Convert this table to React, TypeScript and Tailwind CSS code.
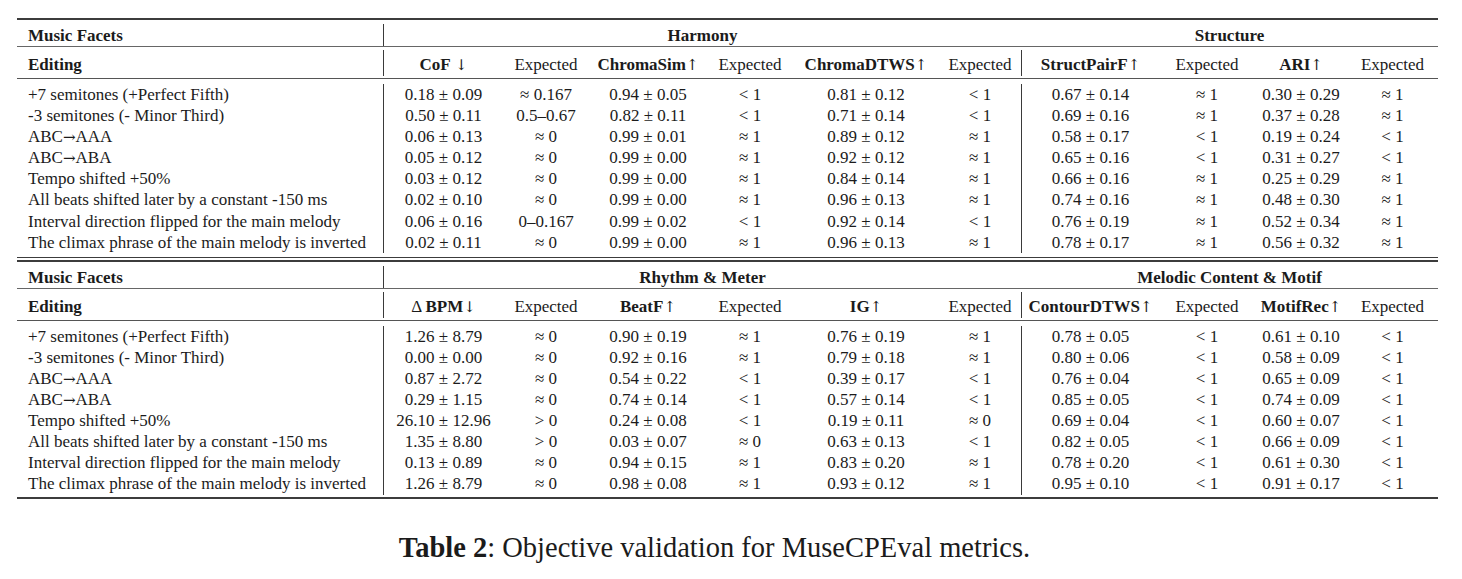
import React from "react";

type Head = { pre?: string; name: string; arrow?: string; bold: boolean };

const cols =
    "grid grid-cols-[366px_120px_86px_118px_86px_146px_82px_138px_96px_92px_91px]";

const topHeads: Head[] = [
    { name: "CoF", arrow: " ↓", bold: true },
    { name: "Expected", bold: false },
    { name: "ChromaSim", arrow: "↑", bold: true },
    { name: "Expected", bold: false },
    { name: "ChromaDTWS", arrow: "↑", bold: true },
    { name: "Expected", bold: false },
    { name: "StructPairF", arrow: "↑", bold: true },
    { name: "Expected", bold: false },
    { name: "ARI", arrow: "↑", bold: true },
    { name: "Expected", bold: false },
];

const bottomHeads: Head[] = [
    { pre: "Δ ", name: "BPM", arrow: "↓", bold: true },
    { name: "Expected", bold: false },
    { name: "BeatF", arrow: "↑", bold: true },
    { name: "Expected", bold: false },
    { name: "IG", arrow: "↑", bold: true },
    { name: "Expected", bold: false },
    { name: "ContourDTWS", arrow: "↑", bold: true },
    { name: "Expected", bold: false },
    { name: "MotifRec", arrow: "↑", bold: true },
    { name: "Expected", bold: false },
];

const topRows: string[][] = [
    ["+7 semitones (+Perfect Fifth)", "0.18 ± 0.09", "≈ 0.167", "0.94 ± 0.05", "< 1", "0.81 ± 0.12", "< 1", "0.67 ± 0.14", "≈ 1", "0.30 ± 0.29", "≈ 1"],
    ["-3 semitones (- Minor Third)", "0.50 ± 0.11", "0.5–0.67", "0.82 ± 0.11", "< 1", "0.71 ± 0.14", "< 1", "0.69 ± 0.16", "≈ 1", "0.37 ± 0.28", "≈ 1"],
    ["ABC→AAA", "0.06 ± 0.13", "≈ 0", "0.99 ± 0.01", "≈ 1", "0.89 ± 0.12", "≈ 1", "0.58 ± 0.17", "< 1", "0.19 ± 0.24", "< 1"],
    ["ABC→ABA", "0.05 ± 0.12", "≈ 0", "0.99 ± 0.00", "≈ 1", "0.92 ± 0.12", "≈ 1", "0.65 ± 0.16", "< 1", "0.31 ± 0.27", "< 1"],
    ["Tempo shifted +50%", "0.03 ± 0.12", "≈ 0", "0.99 ± 0.00", "≈ 1", "0.84 ± 0.14", "≈ 1", "0.66 ± 0.16", "≈ 1", "0.25 ± 0.29", "≈ 1"],
    ["All beats shifted later by a constant -150 ms", "0.02 ± 0.10", "≈ 0", "0.99 ± 0.00", "≈ 1", "0.96 ± 0.13", "≈ 1", "0.74 ± 0.16", "≈ 1", "0.48 ± 0.30", "≈ 1"],
    ["Interval direction flipped for the main melody", "0.06 ± 0.16", "0–0.167", "0.99 ± 0.02", "< 1", "0.92 ± 0.14", "< 1", "0.76 ± 0.19", "≈ 1", "0.52 ± 0.34", "≈ 1"],
    ["The climax phrase of the main melody is inverted", "0.02 ± 0.11", "≈ 0", "0.99 ± 0.00", "≈ 1", "0.96 ± 0.13", "≈ 1", "0.78 ± 0.17", "≈ 1", "0.56 ± 0.32", "≈ 1"],
];

const bottomRows: string[][] = [
    ["+7 semitones (+Perfect Fifth)", "1.26 ± 8.79", "≈ 0", "0.90 ± 0.19", "≈ 1", "0.76 ± 0.19", "≈ 1", "0.78 ± 0.05", "< 1", "0.61 ± 0.10", "< 1"],
    ["-3 semitones (- Minor Third)", "0.00 ± 0.00", "≈ 0", "0.92 ± 0.16", "≈ 1", "0.79 ± 0.18", "≈ 1", "0.80 ± 0.06", "< 1", "0.58 ± 0.09", "< 1"],
    ["ABC→AAA", "0.87 ± 2.72", "≈ 0", "0.54 ± 0.22", "< 1", "0.39 ± 0.17", "< 1", "0.76 ± 0.04", "< 1", "0.65 ± 0.09", "< 1"],
    ["ABC→ABA", "0.29 ± 1.15", "≈ 0", "0.74 ± 0.14", "< 1", "0.57 ± 0.14", "< 1", "0.85 ± 0.05", "< 1", "0.74 ± 0.09", "< 1"],
    ["Tempo shifted +50%", "26.10 ± 12.96", "> 0", "0.24 ± 0.08", "< 1", "0.19 ± 0.11", "≈ 0", "0.69 ± 0.04", "< 1", "0.60 ± 0.07", "< 1"],
    ["All beats shifted later by a constant -150 ms", "1.35 ± 8.80", "> 0", "0.03 ± 0.07", "≈ 0", "0.63 ± 0.13", "< 1", "0.82 ± 0.05", "< 1", "0.66 ± 0.09", "< 1"],
    ["Interval direction flipped for the main melody", "0.13 ± 0.89", "≈ 0", "0.94 ± 0.15", "≈ 1", "0.83 ± 0.20", "≈ 1", "0.78 ± 0.20", "< 1", "0.61 ± 0.30", "< 1"],
    ["The climax phrase of the main melody is inverted", "1.26 ± 8.79", "≈ 0", "0.98 ± 0.08", "≈ 1", "0.93 ± 0.12", "≈ 1", "0.95 ± 0.10", "< 1", "0.91 ± 0.17", "< 1"],
];

// arrows come out tiny in Liberation Serif, so draw them from DejaVu
function Arrowed({ text }: { text: string }) {
    const parts = text.split(/([←→↑↓])/);
    return (
        <>
            {parts.map((p, i) =>
                /[←→↑↓]/.test(p) ? (
                    <span key={i} className="font-['DejaVu_Serif',serif] font-normal text-[15px]">
                        {p}
                    </span>
                ) : (
                    <React.Fragment key={i}>{p}</React.Fragment>
                )
            )}
        </>
    );
}

function barFor(i: number) {
    return i === 1 || i === 7 ? "border-l border-[#3a3a3a]" : "";
}

function Table({
    groups,
    heads,
    rows,
}: {
    groups: [string, string];
    heads: Head[];
    rows: string[][];
}) {
    return (
        <div className="w-[1421px]">
            <div className="h-[2px] bg-[#3c3c3c]" />

            {/* group row */}
            <div className={`${cols} h-[27px] border-b border-[#666] font-bold`}>
                <div className="pl-[11px] pt-[5px] leading-[21px]">Music Facets</div>
                <div className="col-span-6 border-l border-[#3a3a3a] my-[4px] text-center pt-px leading-[21px]">
                    {groups[0]}
                </div>
                <div className="col-span-4 text-center pt-[5px] leading-[21px]">{groups[1]}</div>
            </div>

            {/* metric row */}
            <div className={`${cols} h-[32px] border-b border-[#555]`}>
                <div className="pl-[11px] pt-[7px] leading-[21px] font-bold">Editing</div>
                {heads.map((h, i) => (
                    <div
                        key={i}
                        className={`text-center leading-[21px] whitespace-nowrap ${i === 0 || i === 6 ? "border-l border-[#3a3a3a] my-[3px] pt-[4px]" : "pt-[7px]"}`}
                    >
                        {h.pre && <span>{h.pre}</span>}
                        <span className={h.bold ? "font-bold" : ""}>{h.name}</span>
                        {h.arrow && <Arrowed text={h.arrow} />}
                    </div>
                ))}
            </div>

            {/* data */}
            <div className={`${cols} pt-[5px] pb-[2px]`}>
                {rows.map((r, ri) =>
                    r.map((c, ci) => (
                        <div
                            key={`${ri}-${ci}`}
                            className={`h-[21.1px] leading-[21px] whitespace-nowrap ${ci === 0 ? "pl-[11px]" : "text-center"} ${barFor(ci)}`}
                        >
                            <Arrowed text={c} />
                        </div>
                    ))
                )}
            </div>
        </div>
    );
}

export default function App() {
    return (
        <div className="w-[1462px] h-[579px] bg-white text-[#1b1b1b] font-['Liberation_Serif',serif] text-[17px] pt-[18px] pl-[17px]">
            <Table groups={["Harmony", "Structure"]} heads={topHeads} rows={topRows} />
            <div className="w-[1421px] h-[3px] border-b border-[#3c3c3c]" />
            <div className="w-[1421px] mt-[2px]">
                <Table groups={["Rhythm & Meter", "Melodic Content & Motif"]} heads={bottomHeads} rows={bottomRows} />
                <div className="h-[2px] bg-[#3c3c3c]" />
            </div>

            <p className="w-[1421px] pr-[26px] mt-[32px] text-center text-[28.5px] leading-[34px]">
                <span className="font-bold">Table 2</span>: Objective validation for MuseCPEval metrics.
            </p>
        </div>
    );
}
